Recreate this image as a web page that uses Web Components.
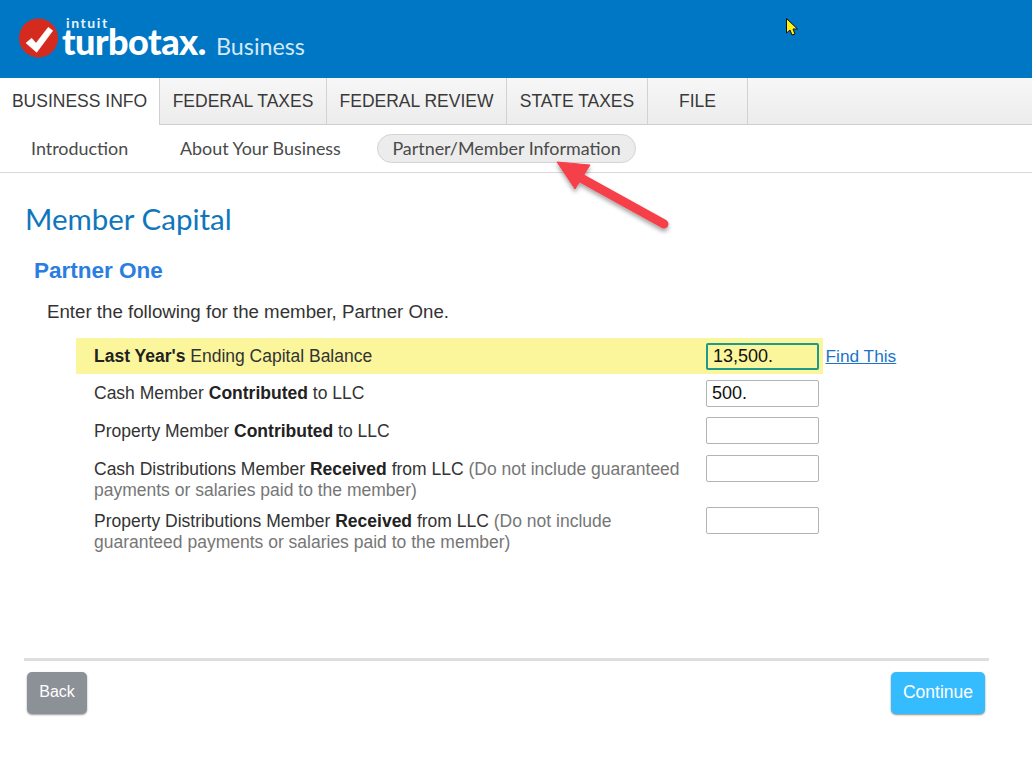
<!DOCTYPE html>
<html>
<head>
<meta charset="utf-8">
<title>TurboTax Business</title>
<style>
  html, body { margin: 0; padding: 0; background: #fff; }
  body { width: 1032px; height: 769px; overflow: hidden; position: relative; font-family: "Liberation Sans", Arial, sans-serif; }
</style>
</head>
<body>
<tt-header></tt-header>
<tt-tabs>
  <tt-tab active w="160">BUSINESS INFO</tt-tab>
  <tt-tab w="167">FEDERAL TAXES</tt-tab>
  <tt-tab w="180">FEDERAL REVIEW</tt-tab>
  <tt-tab w="141">STATE TAXES</tt-tab>
  <tt-tab w="100">FILE</tt-tab>
</tt-tabs>
<tt-subnav>
  <tt-step w="149" pad="31">Introduction</tt-step>
  <tt-step w="228" pad="31">About Your Business</tt-step>
  <tt-step current>Partner/Member Information</tt-step>
</tt-subnav>
<tt-page>
  <span slot="title">Member Capital</span>
  <span slot="name">Partner One</span>
  <span slot="intro">Enter the following for the member, Partner One.</span>
  <tt-row highlight value="13,500." link="Find This" h="36"><b>Last Year's</b> Ending Capital Balance</tt-row>
  <tt-row value="500." h="37">Cash Member <b>Contributed</b> to LLC</tt-row>
  <tt-row h="38" pt="9">Property Member <b>Contributed</b> to LLC</tt-row>
  <tt-row h="52" pt="9">Cash Distributions Member <b>Received</b> from LLC <i>(Do not include guaranteed</i><br><i>payments or salaries paid to the member)</i></tt-row>
  <tt-row h="52" pt="9">Property Distributions Member <b>Received</b> from LLC <i>(Do not include</i><br><i>guaranteed payments or salaries paid to the member)</i></tt-row>
</tt-page>
<tt-footer></tt-footer>
<tt-overlay></tt-overlay>

<script>
function define(name, css, html, init) {
  customElements.define(name, class extends HTMLElement {
    constructor() {
      super()
      this.attachShadow({ mode: 'open' })
    }
    connectedCallback() {
      this.shadowRoot.innerHTML = `<style>${css}</style>${html}`
      if (init) init(this)
    }
  })
}

define('tt-header', `
  :host { display: flex; align-items: flex-start; height: 78px; background: #0077c5; color: #fff; box-sizing: border-box; padding: 18px 0 0 19px; }
  svg { display: block; flex: none; }
  .words { margin-left: 3px; width: 270px; }
  .intuit { font: 700 14px/13px Lato, sans-serif; letter-spacing: 1.6px; margin: -2px 0 0 4px; display: block; color: #e8f3fb; }
  .line { display: flex; align-items: baseline; white-space: nowrap; margin-top: -8px; }
  .turbo { font: 900 36px/40px Lato, sans-serif; letter-spacing: -.5px; width: 154px; flex: none; }
  .biz { font: 400 23.3px/40px Lato, sans-serif; color: #d5e8f5; }
`, `
  <svg width="40" height="40" viewBox="0 0 40 40">
    <circle cx="19.5" cy="20" r="19.5" fill="#d52b1e"/>
    <path d="M7 25 L12.7 20.3 L17 25.3 L29.3 9.3 L33.7 12.7 L17.7 34.3 Z" fill="#fff" stroke="#fff" stroke-width=".6" stroke-linejoin="round"/>
  </svg>
  <div class="words">
    <span class="intuit">intuit</span>
    <div class="line"><span class="turbo">turbotax.</span><span class="biz">Business</span></div>
  </div>
`)

define('tt-tabs', `
  :host { display: flex; height: 47px; box-sizing: border-box; background: linear-gradient(#f7f7f7, #ececec); border-bottom: 1px solid #cfcfcf; }
`, `<slot></slot>`)

define('tt-tab', `
  :host { display: flex; align-items: center; justify-content: center; box-sizing: border-box; height: 47px; font: 17.5px "Liberation Sans", sans-serif; color: #393939; border-right: 1px solid #d2d2d2; padding-bottom: 1px; white-space: nowrap; }
  :host([active]) { background: #fff; }
`, `<slot></slot>`, el => { el.style.width = el.getAttribute('w') + 'px' })

define('tt-subnav', `
  :host { display: flex; align-items: center; height: 48px; box-sizing: border-box; border-bottom: 1px solid #d9d9d9; padding-bottom: 2px; }
`, `<slot></slot>`)

define('tt-step', `
  :host { display: block; box-sizing: border-box; font: 17.9px/26px Lato, sans-serif; color: #4a4a4a; white-space: nowrap; }
  :host([current]) { width: 259px; height: 29px; line-height: 26px; margin-top: 1px; background: #ececec; border: 1px solid #d4d4d4; border-radius: 15px; text-align: center; }
`, `<slot></slot>`, el => {
  if (el.hasAttribute('w')) {
    el.style.width = el.getAttribute('w') + 'px'
    el.style.paddingLeft = el.getAttribute('pad') + 'px'
  }
})

define('tt-page', `
  :host { display: block; height: 485px; box-sizing: border-box; padding: 27px 0 0 25px; }
  h1 { margin: 0; font: 400 29.5px/38px Lato, sans-serif; color: #0f76bd; }
  h2 { margin: 20px 0 0 9px; font: 700 22.5px/26px "Liberation Sans", sans-serif; color: #2a7de1; }
  p { margin: 15px 0 0 22px; font: 18.7px/26px "Liberation Sans", sans-serif; color: #333; }
  .rows { margin: 13px 0 0 51px; width: 747px; display: flex; flex-direction: column; }
`, `
  <h1><slot name="title"></slot></h1>
  <h2><slot name="name"></slot></h2>
  <p><slot name="intro"></slot></p>
  <div class="rows"><slot></slot></div>
`)

define('tt-row', `
  :host { display: flex; align-items: flex-start; box-sizing: border-box; position: relative; font: 17.5px/21px "Liberation Sans", sans-serif; color: #333; white-space: nowrap; }
  :host([highlight]) { background: #fbf69c; margin-bottom: 1px; }
  .label { width: 630px; flex: none; box-sizing: border-box; padding: 8px 0 0 18px; }
  ::slotted(b) { color: #222; }
  ::slotted(i) { font-style: normal; color: #767676; }
  .box { margin-top: 5px; width: 113px; height: 27px; flex: none; box-sizing: border-box; border: 1px solid #b3b3b3; border-radius: 2px; background: #fff; font: 18px/25px "Liberation Sans", sans-serif; color: #111; padding-left: 5px; }
  :host([highlight]) .box { background: #fbf69c; border: 2px solid #1d9a8c; line-height: 23px; }
  a { position: absolute; left: 749.5px; top: 7px; font: 17.3px/23px "Liberation Sans", sans-serif; color: #1b74c8; text-decoration: underline; white-space: nowrap; }
`, `
  <div class="label"><slot></slot></div>
  <div class="box"></div>
`, el => {
  el.style.height = el.getAttribute('h') + 'px'
  const root = el.shadowRoot
  root.querySelector('.box').textContent = el.getAttribute('value') || ''
  if (el.hasAttribute('pt')) root.querySelector('.label').style.paddingTop = el.getAttribute('pt') + 'px'
  if (el.hasAttribute('link')) {
    const a = document.createElement('a')
    a.href = '#'
    a.textContent = el.getAttribute('link')
    root.appendChild(a)
  }
})

define('tt-footer', `
  :host { display: block; margin-left: 24px; width: 965px; border-top: 3px solid #dedede; }
  .bar { display: flex; justify-content: space-between; padding: 11px 4px 0 3px; }
  button { height: 42px; border: 0; border-radius: 5px; color: #fff; font: 17.5px "Liberation Sans", sans-serif; padding: 0 0 2px; }
  .back { width: 60px; font-size: 16px; background: #8c9097; box-shadow: 0 1px 2px rgba(0,0,0,.4); }
  .next { width: 94px; background: #35bcff; box-shadow: 0 1px 2px rgba(0,0,0,.45); }
`, `
  <div class="bar">
    <button class="back">Back</button>
    <button class="next">Continue</button>
  </div>
`)

// annotation arrow and mouse pointer painted on top of the screenshot
define('tt-overlay', `
  :host { display: block; position: absolute; left: 0; top: 0; width: 1032px; height: 769px; pointer-events: none; }
  svg { position: absolute; left: 0; top: 0; }
`, `
  <svg width="1032" height="769" viewBox="0 0 1032 769">
    <defs>
      <filter id="sh" x="-20%" y="-20%" width="140%" height="140%">
        <feDropShadow dx="0" dy="3" stdDeviation="2" flood-color="#000" flood-opacity=".35"/>
      </filter>
    </defs>
    <g filter="url(#sh)">
      <path d="M579 177 L664 224" stroke="#f5404a" stroke-width="9" stroke-linecap="round" fill="none"/>
      <path d="M557 162 L590 165 L575 189 Z" fill="#f5404a" stroke="#f5404a" stroke-width="1" stroke-linejoin="round"/>
    </g>
    <path d="M786.5 18.5 L786.5 33 L790 30 L792 35 L795 34 L793 29 L797.5 29 Z" fill="#ffef14" stroke="#111" stroke-width="1"/>
  </svg>
`)
</script>
</body>
</html>
